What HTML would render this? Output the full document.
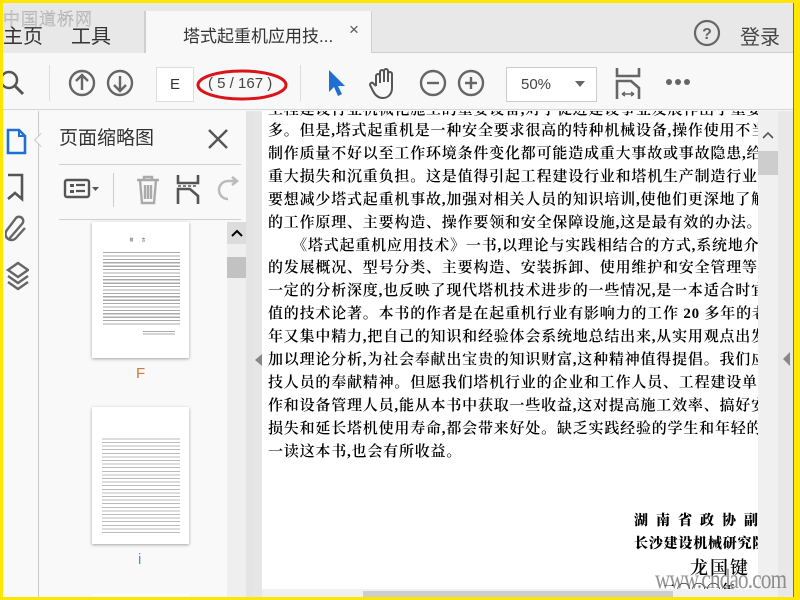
<!DOCTYPE html>
<html><head><meta charset="utf-8">
<style>
*{margin:0;padding:0;box-sizing:border-box}
body{width:800px;height:600px;overflow:hidden;background:#ffe600;position:relative;font-family:"Liberation Sans","Noto Sans CJK SC",sans-serif}
.abs{position:absolute}
#app{position:absolute;left:3px;top:3px;width:791px;height:594px;background:#f8f8f8;overflow:hidden}
.tabbar{left:0;top:0;width:791px;height:50px;background:#e8e8e8;border-bottom:1px solid #cfcfcf}
.tabtxt{font-size:20px;color:#333}
.toolbar{left:0;top:50px;width:791px;height:57px;background:#f8f8f8;border-bottom:1px solid #d6d6d6}
.pg{font-family:"Liberation Serif","Noto Serif CJK SC",serif;font-size:15px;color:#000;white-space:nowrap;font-weight:600;line-height:22.9px;letter-spacing:0.8px}
</style></head><body>
<div id="app">
<div class="abs tabbar"></div>
<div class="abs" style="left:0;top:8px;width:142px;height:43px;background:#e8e8e8;border-right:1px solid #cfcfcf"></div>
<div class="abs tabtxt" style="left:0;top:17px">主页</div>
<div class="abs tabtxt" style="left:68px;top:17px">工具</div>
<div class="abs" style="left:142px;top:8px;width:227px;height:44px;background:#f8f8f8;border-left:1px solid #cfcfcf;border-right:1px solid #cfcfcf"></div>
<div class="abs" style="left:180px;top:19px;font-size:17px;color:#333">塔式起重机应用技...</div>
<div class="abs" style="left:346px;top:17px;font-size:17px;color:#555">×</div>
<svg class="abs" style="left:690px;top:16px" width="28" height="28"><circle cx="14" cy="14" r="12" fill="none" stroke="#666" stroke-width="2.2"/><text x="14" y="20" text-anchor="middle" font-size="16" font-family="Liberation Sans" font-weight="bold" fill="#666">?</text></svg>
<div class="abs tabtxt" style="left:737px;top:18px;color:#444">登录</div>
<div class="abs" style="left:0;top:2px;font-size:17px;color:rgba(255,255,255,.3);-webkit-text-stroke:0.5px #aaa;letter-spacing:1px;font-family:'Liberation Serif','Noto Serif CJK SC',serif;font-weight:300">中国道桥网</div>

<div class="abs toolbar"></div>
<svg class="abs" style="left:0;top:67px" width="24" height="26"><circle cx="6" cy="10" r="8" fill="none" stroke="#555" stroke-width="2.5"/><line x1="12" y1="16" x2="20" y2="24" stroke="#555" stroke-width="3"/></svg>
<div class="abs" style="left:46px;top:62px;width:1px;height:36px;background:#ddd"></div>
<svg class="abs" style="left:65px;top:65px" width="70" height="30"><g fill="none" stroke="#666" stroke-width="2.4"><circle cx="14" cy="15" r="12"/><path d="M14 22V8M8 13l6-6 6 6"/><circle cx="52" cy="15" r="12"/><path d="M52 8v14M46 17l6 6 6-6"/></g></svg>
<div class="abs" style="left:153px;top:64px;width:38px;height:35px;background:#fff;border:1px solid #ddd;font-size:15px;color:#333;text-align:center;line-height:33px">E</div>
<svg class="abs" style="left:192px;top:64px" width="96" height="36"><ellipse cx="47" cy="18" rx="44" ry="14" fill="none" stroke="#d9141a" stroke-width="3"/></svg>
<div class="abs" style="left:205px;top:72px;font-size:15px;color:#444">( 5 / 167 )</div>
<div class="abs" style="left:297px;top:62px;width:1px;height:36px;background:#ddd"></div>
<svg class="abs" style="left:322px;top:65px" width="22" height="30"><path d="M4 2L4 24 9 19 13 28 17 26 13 18 20 18Z" fill="#1e6fd0"/></svg>
<svg class="abs" style="left:366px;top:63px" width="30" height="34"><path d="M7 20V10a2 2 0 014 0V17M11 17V6a2 2 0 014 0V16M15 16V5a2 2 0 014 0V16M19 16V8a2 2 0 014 0V22c0 6-4 10-9 10s-8-3-10-7l-3-6a2 2 0 013-2l3 3" fill="none" stroke="#555" stroke-width="2"/></svg>
<svg class="abs" style="left:415px;top:65px" width="70" height="30"><g fill="none" stroke="#666" stroke-width="2.4"><circle cx="15" cy="15" r="12"/><path d="M9 15h12"/><circle cx="53" cy="15" r="12"/><path d="M47 15h12M53 9v12"/></g></svg>
<div class="abs" style="left:503px;top:64px;width:91px;height:35px;background:#fff;border:1px solid #ccc"></div>
<div class="abs" style="left:518px;top:73px;font-size:15px;color:#444">50%</div>
<svg class="abs" style="left:572px;top:78px" width="12" height="8"><path d="M0 0h10L5 6z" fill="#666"/></svg>
<svg class="abs" style="left:612px;top:65px" width="26" height="32"><g fill="none" stroke="#666" stroke-width="2.6"><path d="M2 0v8h22V0"/><path d="M2 31V13h14l8 7v11"/><path d="M7 26h12M7 26l3-2M7 26l3 2M19 26l-3-2M19 26l-3 2" stroke-width="1.4"/></g></svg>
<svg class="abs" style="left:662px;top:74px" width="32" height="10"><circle cx="4" cy="5" r="3" fill="#666"/><circle cx="13" cy="5" r="3" fill="#666"/><circle cx="22" cy="5" r="3" fill="#666"/></svg>

<div class="abs" style="left:0;top:108px;width:36px;height:486px;background:#f9f9f9;border-right:1px solid #c9c9c9"></div>
<svg class="abs" style="left:2px;top:124px" width="22" height="30"><path d="M3 3h11l6 6v17H3z" fill="none" stroke="#1e6fd0" stroke-width="2.6"/><path d="M14 3v6h6" fill="none" stroke="#1e6fd0" stroke-width="2"/></svg>
<svg class="abs" style="left:2px;top:170px" width="20" height="30"><path d="M3 2h14v24l-7-6-7 6" fill="none" stroke="#555" stroke-width="2.6"/></svg>
<svg class="abs" style="left:2px;top:212px" width="22" height="30"><path d="M4 24L17 9a4 4 0 00-6-6L2 15a6 6 0 009 8l9-10" fill="none" stroke="#666" stroke-width="2.4"/></svg>
<svg class="abs" style="left:2px;top:258px" width="24" height="32"><g fill="none" stroke="#666" stroke-width="2.4"><path d="M3 9l10-7 10 7-10 7z"/><path d="M3 15l10 7 10-7"/><path d="M3 21l10 7 10-7"/></g></svg>

<div class="abs" style="left:37px;top:108px;width:206px;height:486px;background:#f9f9f9"></div>
<div class="abs" style="left:33px;top:132px;width:10px;height:10px;background:#f9f9f9;border-left:1px solid #c9c9c9;border-bottom:1px solid #c9c9c9;transform:rotate(45deg)"></div>
<div class="abs" style="left:56px;top:120px;font-size:19px;color:#333">页面缩略图</div>
<svg class="abs" style="left:204px;top:125px" width="22" height="22"><path d="M2 2l18 18M20 2L2 20" stroke="#555" stroke-width="2.4"/></svg>
<div class="abs" style="left:56px;top:161px;width:182px;height:1px;background:#cfcfcf"></div>
<svg class="abs" style="left:60px;top:175px" width="40" height="22"><rect x="2" y="2" width="24" height="17" rx="2" fill="none" stroke="#555" stroke-width="2.4"/><rect x="7" y="6" width="4" height="3" fill="#555"/><rect x="7" y="12" width="4" height="3" fill="#555"/><path d="M13 7h9M13 13h9" stroke="#555" stroke-width="2.2"/><path d="M29 9h7l-3.5 4z" fill="#555"/></svg>
<div class="abs" style="left:110px;top:170px;width:1px;height:34px;background:#ccc"></div>
<svg class="abs" style="left:132px;top:172px" width="26" height="30"><g fill="none" stroke="#aaa" stroke-width="2.4"><path d="M2 5h22M9 5V2h8v3M5 5l2 23h12l2-23M10 10v14M13 10v14M16 10v14"/></g></svg>
<svg class="abs" style="left:173px;top:172px" width="24" height="30"><g fill="none" stroke="#555" stroke-width="2.6"><path d="M2 0v8h20V0"/><path d="M2 29V14h12l8 7v8"/><path d="M2 11h20" stroke-dasharray="3 2" stroke-width="1.6"/></g></svg>
<svg class="abs" style="left:213px;top:172px" width="24" height="28"><path d="M12 24a9 9 0 110-18h8M16 2l5 4-5 4" fill="none" stroke="#bbb" stroke-width="2.6"/></svg>
<div class="abs" style="left:56px;top:216px;width:182px;height:1px;background:#cfcfcf"></div>
<div class="abs" style="left:224px;top:219px;width:19px;height:375px;background:#efefef"></div>
<div class="abs" style="left:224px;top:219px;width:19px;height:22px;background:#dcdcdc"></div>
<svg class="abs" style="left:228px;top:226px" width="12" height="8"><path d="M1 7l5-5 5 5" fill="none" stroke="#000" stroke-width="2"/></svg>
<div class="abs" style="left:224px;top:254px;width:19px;height:21px;background:#c2c2c2"></div>
<div class="abs" style="left:243px;top:108px;width:7px;height:486px;background:#e4e4e4"></div>
<div class="abs" style="left:89px;top:219px;width:97px;height:136px;background:#fff;box-shadow:0 1px 3px rgba(0,0,0,.35);padding:15px 9px 0 11px">
 <div style="text-align:center;font-size:4px;color:#333;letter-spacing:8px;margin-bottom:8px">前言</div>
 <div style="height:76px;background:repeating-linear-gradient(#fff 0,#fff 1px,#aaa 1px,#aaa 2.2px,#fff 2.2px,#fff 3.4px)"></div>
 <div style="margin:4px 0 0 40px;width:32px;height:5px;background:repeating-linear-gradient(#aaa 0,#aaa 1px,#fff 1px,#fff 2.5px)"></div>
</div>
<div class="abs" style="left:133px;top:362px;font-size:15px;color:#c87b3a">F</div>
<div class="abs" style="left:89px;top:404px;width:97px;height:137px;background:#fff;box-shadow:0 1px 3px rgba(0,0,0,.35);padding:30px 9px 0 10px">
 <div style="height:97px;background:repeating-linear-gradient(#fff 0,#fff 1.4px,#bbb 1.4px,#bbb 2.4px,#fff 2.4px,#fff 3.6px)"></div>
</div>
<div class="abs" style="left:135px;top:548px;font-size:15px;color:#4a90d9">i</div>
<div class="abs" style="left:89px;top:591px;width:97px;height:6px;background:#fff"></div>

<div class="abs" style="left:250px;top:108px;width:541px;height:486px;background:#e6e6e6"></div>
<div class="abs" style="left:259px;top:108px;width:496px;height:478px;background:#fff;overflow:hidden">
 <div class="pg" style="position:absolute;left:6px;top:-12px">工程建设行业机械化施工的重要设备,对于促进建设事业发展作出了重要贡献</div>
 <div class="pg" style="position:absolute;left:6px;top:9px">多。但是,塔式起重机是一种安全要求很高的特种机械设备,操作使用不当<br>制作质量不好以至工作环境条件变化都可能造成重大事故或事故隐患,给<br>重大损失和沉重负担。这是值得引起工程建设行业和塔机生产制造行业高<br>要想减少塔式起重机事故,加强对相关人员的知识培训,使他们更深地了解<br>的工作原理、主要构造、操作要领和安全保障设施,这是最有效的办法。<br>　　《塔式起重机应用技术》一书,以理论与实践相结合的方式,系统地介绍<br>的发展概况、型号分类、主要构造、安装拆卸、使用维护和安全管理等知识,内<br>一定的分析深度,也反映了现代塔机技术进步的一些情况,是一本适合时宜<br>值的技术论著。本书的作者是在起重机行业有影响力的工作 20 多年的老一<br>年又集中精力,把自己的知识和经验体会系统地总结出来,从实用观点出发<br>加以理论分析,为社会奉献出宝贵的知识财富,这种精神值得提倡。我们应<br>技人员的奉献精神。但愿我们塔机行业的企业和工作人员、工程建设单位的<br>作和设备管理人员,能从本书中获取一些收益,这对提高施工效率、搞好安全<br>损失和延长塔机使用寿命,都会带来好处。缺乏实践经验的学生和年轻的科<br>一读这本书,也会有所收益。</div>
 <div class="pg" style="position:absolute;left:372px;top:400px;font-weight:900;font-size:14px;letter-spacing:8px">湖南省政协副</div>
 <div class="pg" style="position:absolute;left:372px;top:423px;font-weight:900;font-size:14px">长沙建设机械研究院</div>
 <div class="pg" style="position:absolute;left:428px;top:446px;font-size:18px;letter-spacing:2px">龙国键</div>
 <div class="pg" style="position:absolute;left:400px;top:470px;font-size:14px">二〇〇〇年</div>
</div>
<div class="abs" style="left:252px;top:351px;width:0;height:0;border-top:6px solid transparent;border-bottom:6px solid transparent;border-right:7px solid #888"></div>
<div class="abs" style="left:755px;top:108px;width:20px;height:486px;background:#f0f0f0"></div>
<svg class="abs" style="left:759px;top:128px" width="12" height="8"><path d="M1 7l5-5 5 5" fill="none" stroke="#555" stroke-width="1.6"/></svg>
<div class="abs" style="left:755px;top:148px;width:20px;height:24px;background:#cdcdcd"></div>
<div class="abs" style="left:775px;top:108px;width:15px;height:486px;background:#e8e8e8"></div>
<div class="abs" style="left:780px;top:349px;width:0;height:0;border-top:7px solid transparent;border-bottom:7px solid transparent;border-right:7px solid #888"></div>
<div class="abs" style="left:790px;top:0;width:1px;height:594px;background:#2a9a4a"></div>
<div class="abs" style="left:259px;top:586px;width:496px;height:8px;background:#f0f0f0"></div>
<div class="abs" style="left:360px;top:588px;width:310px;height:6px;background:#cdcdcd"></div>
<div class="abs" style="left:652px;top:561px;font-family:'Liberation Serif',serif;font-size:27px;color:rgba(110,110,110,.75);letter-spacing:-1px;transform:scaleX(.78);transform-origin:left">www.cndao.com</div>
</div>
</body></html>
